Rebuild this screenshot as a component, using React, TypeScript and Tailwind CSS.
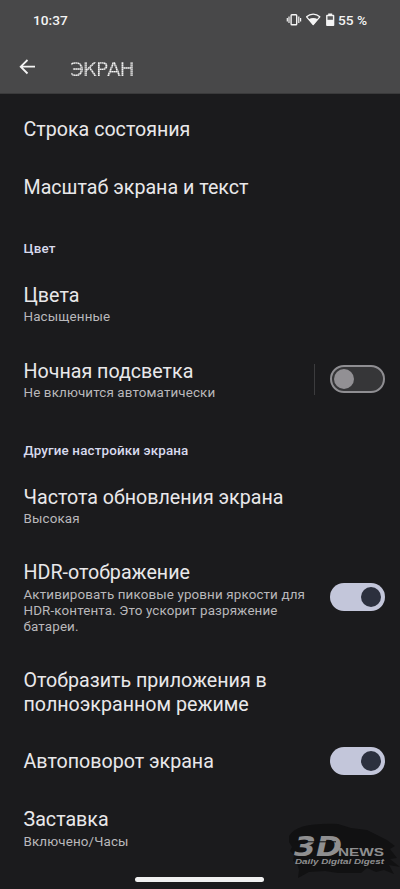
import clsx from 'clsx';

type Item = {
  title: string;
  summary?: string;
  toggle?: boolean;
  divider?: boolean;
};

const topItems: Item[] = [
  { title: 'Строка состояния' },
  { title: 'Масштаб экрана и текст' },
];

const colorItems: Item[] = [
  { title: 'Цвета', summary: 'Насыщенные' },
  {
    title: 'Ночная подсветка',
    summary: 'Не включится автоматически',
    toggle: false,
    divider: true,
  },
];

const otherItems: Item[] = [
  { title: 'Частота обновления экрана', summary: 'Высокая' },
  {
    title: 'HDR-отображение',
    summary: 'Активировать пиковые уровни яркости для HDR-контента. Это ускорит разряжение батареи.',
    toggle: true,
  },
  { title: 'Отобразить приложения в полноэкранном режиме' },
  { title: 'Автоповорот экрана', toggle: true },
  { title: 'Заставка', summary: 'Включено/Часы' },
];

function Toggle({ on }: { on: boolean }) {
  return (
    <button
      role="switch"
      aria-checked={on}
      className={clsx(
        'flex h-7 w-[54.5px] shrink-0 items-center rounded-full',
        on ? 'justify-end bg-[#c3c6da] pr-[3.5px]' : 'border-2 border-[#8f8e92] bg-[#363638] pl-[2px]'
      )}
    >
      <span className={clsx('size-5 rounded-full', on ? 'bg-[#2c303e]' : 'bg-[#929094]')} />
    </button>
  );
}

function Row({ title, summary, toggle, divider }: Item) {
  return (
    <div className="flex items-center py-[17.05px] pr-[15.5px] pl-[23.5px]">
      <div className="w-[286px]">
        <div className="text-[19.65px] leading-[23.4px] text-[#e9e8ea]">{title}</div>
        {summary && (
          <div className="mt-[2.4px] text-[13.4px] leading-[16px] tracking-[0.13px] text-[#b9b8bb]">
            {summary}
          </div>
        )}
      </div>
      {toggle !== undefined && (
        <div className="-mt-[6px] -mb-1 ml-auto flex h-5 items-center">
          {divider && <div className="mr-[15.5px] h-[31px] w-px bg-[#3c3c3e]" />}
          <Toggle on={toggle} />
        </div>
      )}
    </div>
  );
}

function SectionTitle({ children }: { children: string }) {
  return (
    <h2 className="h-[50.2px] pt-[24.2px] pl-[23.5px] text-[13.4px] leading-4 font-medium tracking-[0.15px] text-[#d8daee]">
      {children}
    </h2>
  );
}

function StatusIcons() {
  return (
    <svg width="48.5" height="16" viewBox="0 0 48.5 16" fill="none">
      {/* vibrate */}
      <rect x="5.1" y="2.7" width="5.6" height="10" rx="0.8" stroke="#f4f4f4" strokeWidth="1.4" />
      <path d="M3 4.5v6.5M1.3 6v3.5M12.8 4.5v6.5M14.6 6v3.5" stroke="#f4f4f4" strokeWidth="1.2" />
      {/* wifi */}
      <path
        d="M20.6 4.8C24.4 1.1 30 1.1 33.8 4.8L27.2 12.6Z"
        stroke="#f4f4f4"
        strokeWidth="1.3"
        strokeLinejoin="round"
      />
      <path d="M22.6 7.2C25.7 5.6 28.7 5.6 31.8 7.2L27.2 13Z" fill="#f4f4f4" />
      {/* battery */}
      <path
        d="M42.2 1.5h4v1.3h1.2a.9.9 0 0 1 .9.9v9.3a.9.9 0 0 1-.9.9h-6.4a.9.9 0 0 1-.9-.9V3.7a.9.9 0 0 1 .9-.9H42.2Z"
        fill="#f4f4f4"
      />
      <path d="M41.5 4.2h5.4v3.6h-5.4Z" fill="#5a5a5b" />
    </svg>
  );
}

function Watermark() {
  return (
    <svg className="absolute top-[821px] left-[285px]" width="115" height="60" viewBox="0 0 115 60">
      {/* brush stroke */}
      <path
        d="M4 15C10 5 26 2 53 3L66 7L82 9L94 15L102 19L110 25L105 28L112 37L105 38L115 46L104 44L109 53L99 49L91 51L82 47L76 52L53 52L40 50L24 51L13 57L14 49L12 42L8 40L9 34L5 30L7 26L4 21Z"
        fill="#111112"
      />
      <g fill="#8f8f90" fontFamily="'DejaVu Sans', sans-serif">
        <text
          x="9"
          y="34.5"
          fontSize="27"
          fontWeight="700"
          fontStyle="italic"
          textLength="48"
          lengthAdjust="spacingAndGlyphs"
        >
          3D
        </text>
        <path d="M10 20.8H51" stroke="#111112" strokeWidth="1" />
        <text
          x="53"
          y="35"
          fontSize="11.5"
          fontFamily="'Liberation Sans', sans-serif"
          fontWeight="700"
          textLength="46"
          lengthAdjust="spacingAndGlyphs"
        >
          NEWS
        </text>
        <text
          x="10"
          y="42.8"
          fontSize="7.8"
          fontFamily="'Liberation Sans', sans-serif"
          fontStyle="italic"
          fontWeight="700"
          textLength="89"
          lengthAdjust="spacingAndGlyphs"
        >
          Daily Digital Digest
        </text>
      </g>
    </svg>
  );
}

export default function App() {
  return (
    <div className="relative flex h-[889px] w-[400px] flex-col overflow-hidden bg-[#1b1b1d] font-['Roboto',sans-serif]">
      <header className="h-[94px] shrink-0 border-b border-[#3a3a3b] bg-[#484849] text-[#f4f4f4]">
        <div className="flex h-10 items-center justify-between pr-[33px] pl-[33px] text-[13.7px] font-medium">
          <span>10:37</span>
          <div className="flex items-center gap-[3px]">
            <StatusIcons />
            <span>55 %</span>
          </div>
        </div>
        <div className="flex h-[54px] items-center pl-[19px]">
          <svg width="17" height="16" viewBox="0 0 17 16" fill="none">
            <path d="M8.5 1L1.7 7.7L8.5 14.5M1.7 7.7H16" stroke="#f4f4f4" strokeWidth="1.8" />
          </svg>
          {/* the mask breaks the strokes into a dot-matrix pattern */}
          <h1 className="mt-[3px] ml-[34px] [mask-image:linear-gradient(90deg,#000_50%,#000b_50%),linear-gradient(#000_50%,#000b_50%)] [mask-size:2px_2px] [mask-composite:intersect] font-['DejaVu_Sans',sans-serif] text-[20px] leading-6 tracking-[-1.1px]">
            ЭКРАН
          </h1>
        </div>
      </header>

      <main className="pt-[7.4px]">
        {topItems.map((item) => (
          <Row key={item.title} {...item} />
        ))}
        <SectionTitle>Цвет</SectionTitle>
        {colorItems.map((item) => (
          <Row key={item.title} {...item} />
        ))}
        <SectionTitle>Другие настройки экрана</SectionTitle>
        {otherItems.map((item) => (
          <Row key={item.title} {...item} />
        ))}
      </main>

      <Watermark />
      <div className="absolute top-[877px] left-[135px] h-[4.5px] w-[129px] rounded-full bg-[#f1f1f1]" />
    </div>
  );
}
